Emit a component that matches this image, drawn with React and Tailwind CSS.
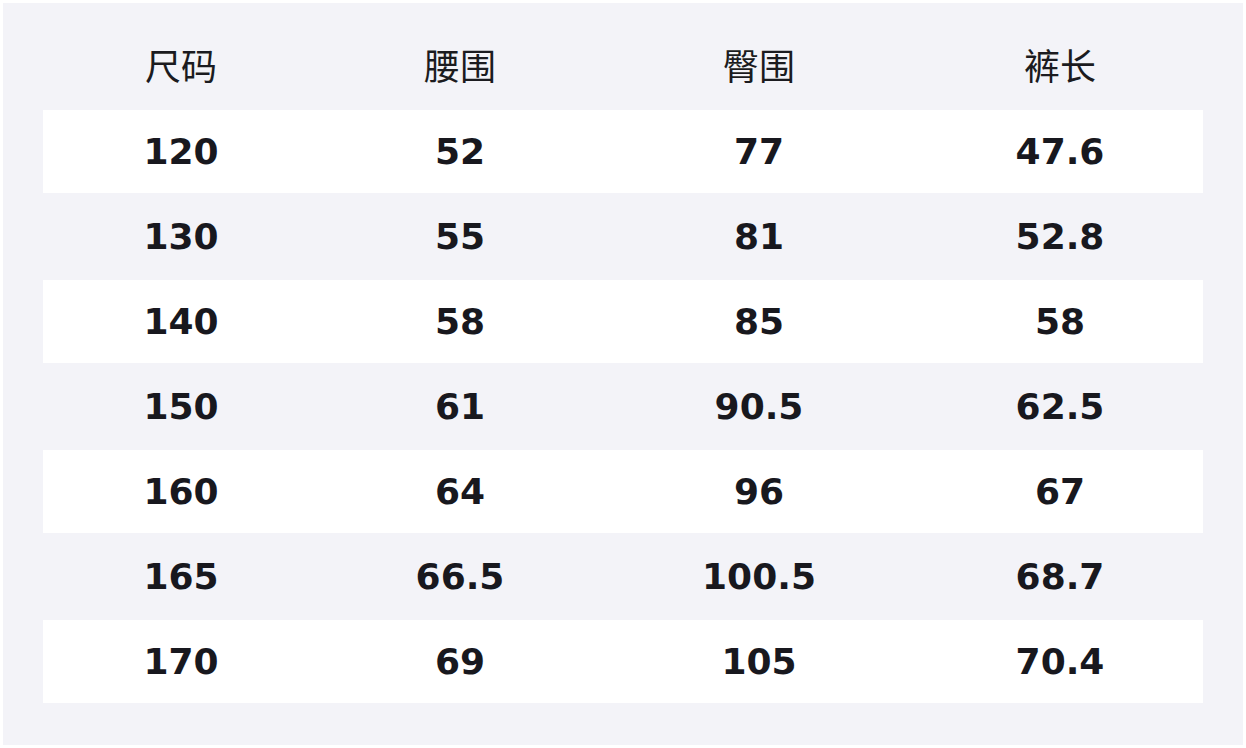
export default function App() {
  const rows = [
    ["120", "52", "77", "47.6"],
    ["130", "55", "81", "52.8"],
    ["140", "58", "85", "58"],
    ["150", "61", "90.5", "62.5"],
    ["160", "64", "96", "67"],
    ["165", "66.5", "100.5", "68.7"],
    ["170", "69", "105", "70.4"],
  ];
  const head = ["尺码", "腰围", "臀围", "裤长"];
  return (
    <div className="bg-white p-[3px] w-[1246px] h-[748px]">
      <div className="bg-[#f3f3f8] px-10 pt-10 pb-[41px] h-[742px]">
        <div
          className="grid grid-cols-[276px_282px_316px_286px] h-[66px] items-start pt-[3px] leading-none text-[36px] text-[#1b1b20]"
          style={{ fontFamily: '"Noto Sans CJK SC", "Noto Sans", sans-serif' }}
        >
          {head.map((h) => (
            <div key={h} className="text-center">{h}</div>
          ))}
        </div>
        {rows.map((r, i) => (
          <div
            key={i}
            className={`grid grid-cols-[276px_282px_316px_286px] h-[85px] items-center text-[36px] font-bold text-[#18181e] ${
              i % 2 === 0 ? "bg-white border-y border-[#f3f3f8]" : ""
            }`}
            style={{ fontFamily: '"DejaVu Sans", sans-serif' }}
          >
            {r.map((c, j) => (
              <div key={j} className="text-center">{c}</div>
            ))}
          </div>
        ))}
      </div>
    </div>
  );
}
